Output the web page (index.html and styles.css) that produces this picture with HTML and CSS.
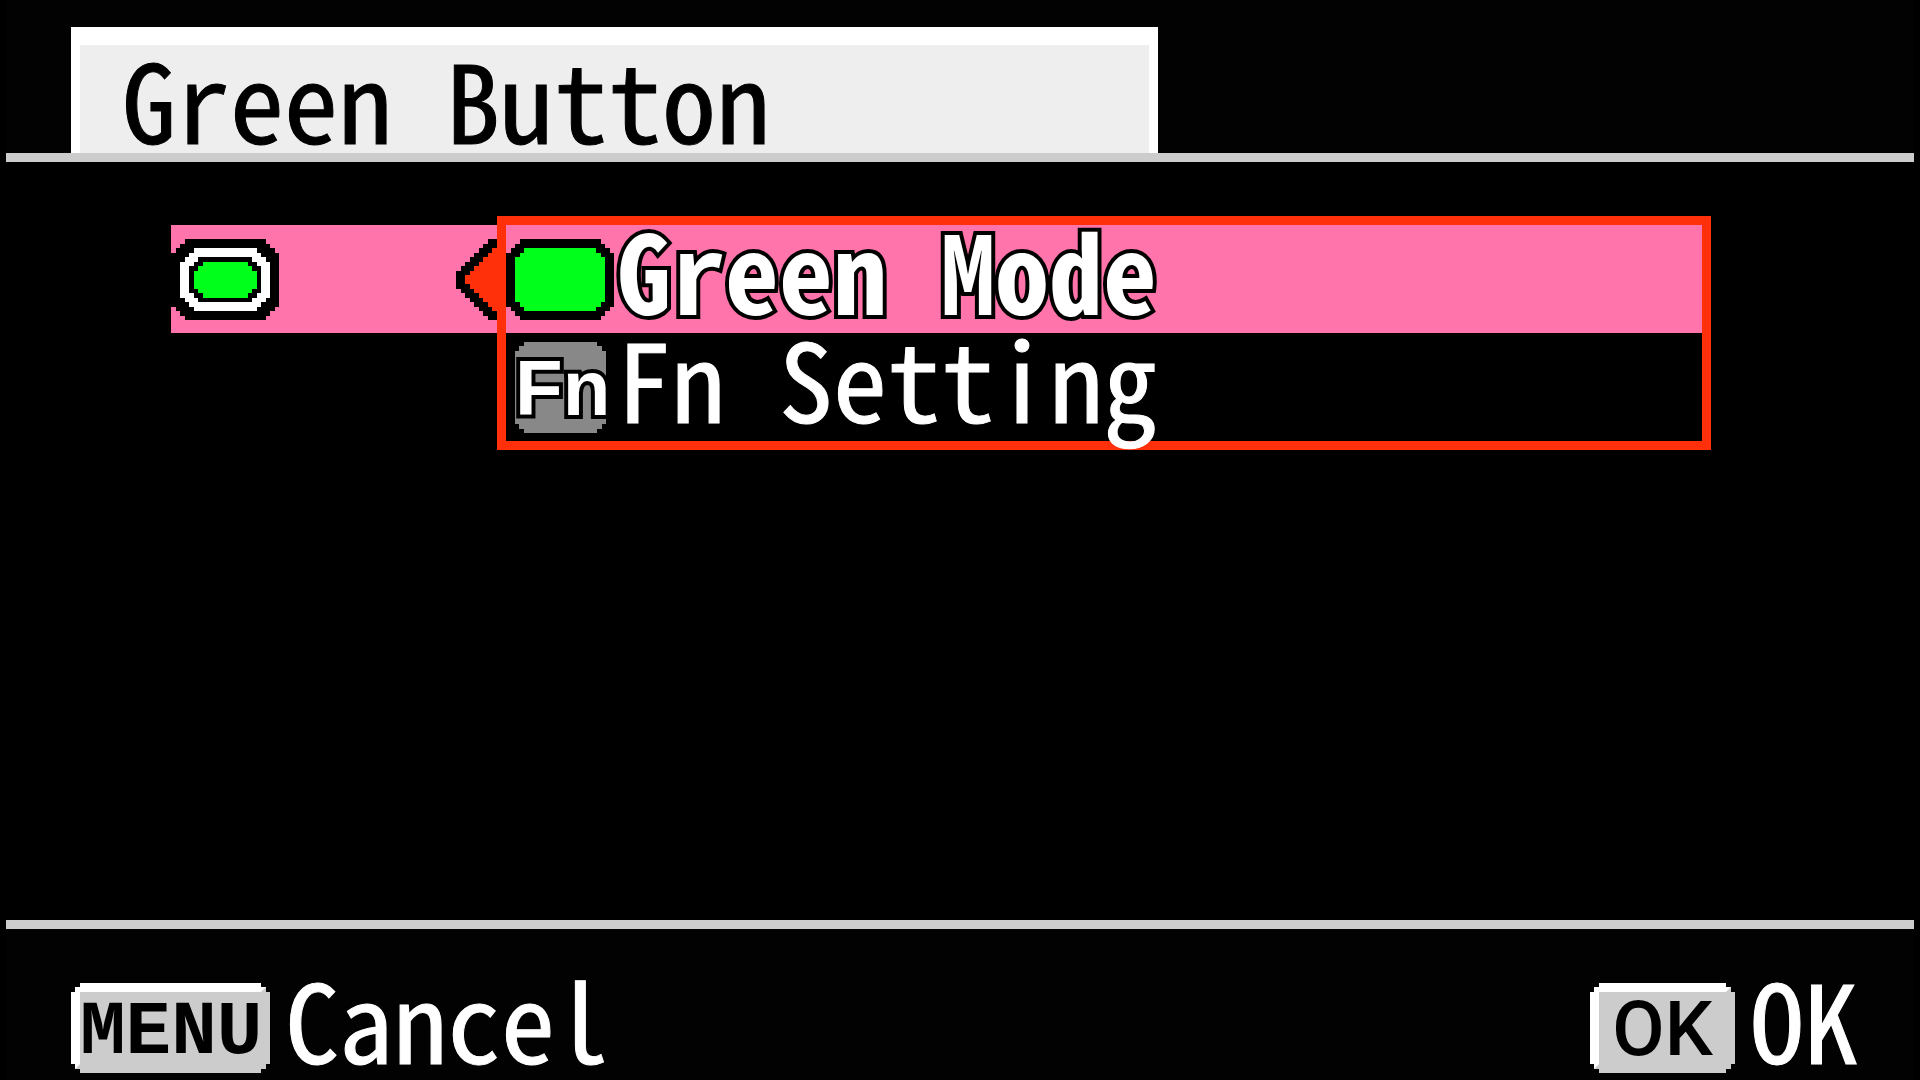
FILE: index.html
```html
<!DOCTYPE html>
<html lang="en">
<head>
<meta charset="utf-8">
<title>Green Button</title>
<link rel="stylesheet" href="styles.css">
</head>
<body>
<div class="screen">
  <header class="header">
    <h1 class="title">Green Button</h1>
  </header>

  <main class="content">
    <div class="setting">
      <svg class="icon-button" viewBox="0 0 24 18" role="img" aria-label="Green button">
        <path fill="#000" d="M3 0H21V1H22V2H23V3H24V15H23V16H22V17H21V18H3V17H2V16H1V15H0V3H1V2H2V1H3Z"/>
        <path fill="#fff" d="M5 2H19V3H20V4H21V5H22V13H21V14H20V15H19V16H5V15H4V14H3V13H2V5H3V4H4V3H5Z"/>
        <path fill="#000" d="M6 4H18V5H19V6H20V12H19V13H18V14H6V13H5V12H4V6H5V5H6Z"/>
        <path fill="#00ff1a" d="M7 5H17V6H18V7H19V11H18V12H17V13H7V12H6V11H5V7H6V6H7Z"/>
      </svg>
      <svg class="icon-arrow" viewBox="0 0 9 18" aria-hidden="true">
        <path fill="#000" d="M9 0H7V1H6V2H5V3H4V4H3V5H2V6H1V7H0V11H1V12H2V13H3V14H4V15H5V16H6V17H7V18H9Z"/>
        <path fill="#ff300a" d="M9 2H8V3H7V4H6V5H5V6H4V7H3V8H2V10H3V11H4V12H5V13H6V14H7V15H8V16H9Z"/>
      </svg>
    </div>
    <div class="options">
      <button class="option option-selected" type="button">
        <svg class="icon-button" viewBox="0 0 24 18" aria-hidden="true">
          <path fill="#000" d="M3 0H21V1H22V2H23V3H24V15H23V16H22V17H21V18H3V17H2V16H1V15H0V3H1V2H2V1H3Z"/>
          <path fill="#00ff1a" d="M4 2H20V3H21V4H22V14H21V15H20V16H4V15H3V14H2V4H3V3H4Z"/>
        </svg>
        <span class="label">Green Mode</span>
      </button>
      <button class="option" type="button">
        <span class="icon-fn">Fn</span>
        <span class="label">Fn Setting</span>
      </button>
    </div>
  </main>

  <footer class="footer">
    <button class="action" type="button">
      <span class="key key-menu">MENU</span>
      <span class="label">Cancel</span>
    </button>
    <button class="action" type="button">
      <span class="key key-ok">OK</span>
      <span class="label">OK</span>
    </button>
  </footer>
</div>
</body>
</html>
```
FILE: styles.css
```css
* {
  box-sizing: border-box;
}

body {
  margin: 0;
  background: #000;
  color: #fff;
  font-family: "Noto Sans Mono CJK JP", "Noto Sans CJK JP", monospace;
  font-size: 108px;
  line-height: 86px;
  font-feature-settings: "hwid";
}

button {
  margin: 0;
  padding: 0;
  border: 0;
  background: none;
  color: inherit;
  font: inherit;
  font-feature-settings: inherit;
  text-align: left;
  cursor: pointer;
}

svg {
  display: block;
  flex: none;
  shape-rendering: crispEdges;
}

.screen {
  display: flex;
  flex-direction: column;
  min-height: 100vh;
  padding: 0 6px;
}

.header {
  padding: 27px 65px 0;
  border-bottom: 9px solid #ccc;
  background: #020203;
}

.title {
  max-width: 1087px;
  margin: 0;
  padding: 9px 42px 13px;
  border: 9px solid #fff;
  border-top-width: 18px;
  border-bottom: 0;
  background: #eee;
  color: #000;
  font-size: inherit;
  font-weight: 400;
}

.title,
.label {
  -webkit-text-stroke: 1px currentColor;
}

.content {
  display: flex;
  flex: 1;
  align-items: flex-start;
  padding: 54px 203px 54px 165px;
}

.setting {
  display: flex;
  flex: none;
  align-items: center;
  justify-content: space-between;
  width: 326px;
  height: 108px;
  margin-top: 9px;
  background: #ff74aa;
}

.icon-button {
  width: 108px;
  height: 81px;
}

.icon-arrow {
  width: 41px;
  height: 81px;
}

.options {
  display: flex;
  flex: 1;
  flex-direction: column;
  border: 9px solid #ff300a;
}

.option {
  display: flex;
  align-items: flex-start;
  height: 108px;
}

.option-selected {
  background: #ff74aa;
}

.option .icon-button {
  margin-top: 14px;
}

.option .label {
  margin-left: 3px;
}

.option-selected .label {
  font-weight: 700;
  -webkit-text-stroke: 8px #000;
  paint-order: stroke fill;
}

.icon-fn {
  flex: none;
  width: 91px;
  height: 91px;
  margin: 9px 8px 0 9px;
  background: #888;
  clip-path: polygon(9px 0, 82px 0, 82px 4px, 87px 4px, 87px 9px, 91px 9px, 91px 82px, 87px 82px, 87px 87px, 82px 87px, 82px 91px, 9px 91px, 9px 87px, 4px 87px, 4px 82px, 0 82px, 0 9px, 4px 9px, 4px 4px, 9px 4px);
  font-family: "Liberation Sans", sans-serif;
  font-size: 78px;
  font-weight: 700;
  line-height: 92px;
  text-align: center;
  -webkit-text-stroke: 8px #000;
  paint-order: stroke fill;
}

.footer {
  display: flex;
  justify-content: space-between;
  padding: 45px 56px 7px 65px;
  border-top: 9px solid #ccc;
  background: #020203;
}

.action {
  display: flex;
  align-items: flex-start;
  gap: 15px;
}

.key {
  height: 90px;
  margin-top: 9px;
  border: 9px solid #ccc;
  border-top-color: #fff;
  border-left-color: #fff;
  background: #ccc;
  clip-path: polygon(9px 0, calc(100% - 9px) 0, calc(100% - 9px) 4px, calc(100% - 4px) 4px, calc(100% - 4px) 9px, 100% 9px, 100% calc(100% - 9px), calc(100% - 4px) calc(100% - 9px), calc(100% - 4px) calc(100% - 4px), calc(100% - 9px) calc(100% - 4px), calc(100% - 9px) 100%, 9px 100%, 9px calc(100% - 4px), 4px calc(100% - 4px), 4px calc(100% - 9px), 0 calc(100% - 9px), 0 9px, 4px 9px, 4px 4px, 9px 4px);
  color: #000;
  font-size: 76px;
  line-height: 74px;
  text-align: center;
}

.key-menu {
  width: 199px;
  font-family: "Liberation Mono", monospace;
  font-weight: 700;
  line-height: 82px;
}

.key-ok {
  width: 145px;
  font-family: Roboto, sans-serif;
  font-weight: 500;
}
```
